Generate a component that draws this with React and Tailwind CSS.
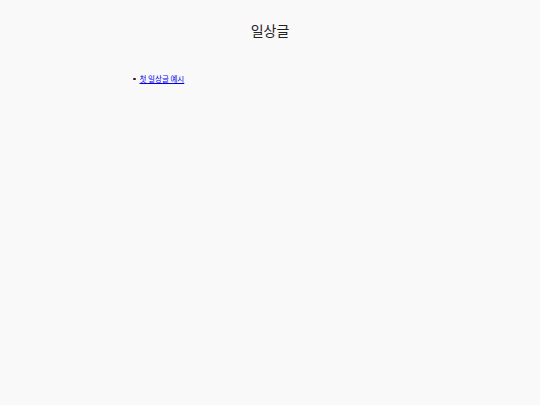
export default function App() {
  return (
    <div className="min-h-screen bg-[#f9f9f9] font-['Noto_Sans_CJK_KR','Noto_Sans',sans-serif] text-[#222]">
      <div className="mx-auto w-[290px] pt-[20px]">
        <h1 className="text-center text-[14px] leading-[20px] font-normal">일상글</h1>
        <ul className="mt-[34px] pl-[8px] text-[7.5px] leading-[10px]">
          <li className="flex items-center gap-[4px]">
            <span className="h-[2.5px] w-[2.5px] rounded-full bg-[#222]" />
            <a href="#" className="text-[#0000ee] underline">
              첫 일상글 예시
            </a>
          </li>
        </ul>
      </div>
    </div>
  );
}
